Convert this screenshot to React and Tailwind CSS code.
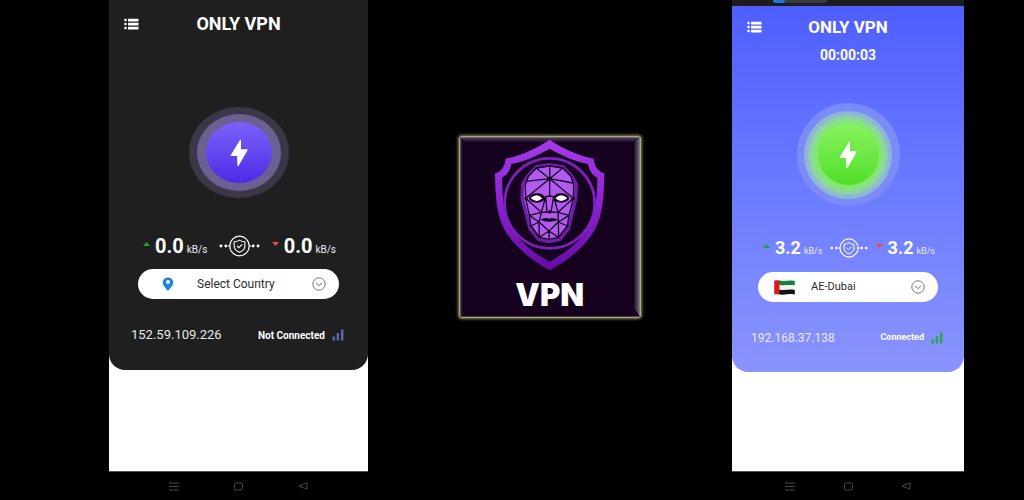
import { useState } from 'react';

const idle = {
  shell: 'bg-[#1f1f1f] rounded-b-[16px]',
  header: 'h-12',
  title: 'text-lg',
  orb: 'mt-[59px] h-[91px] w-[100px] bg-[#3c3746]',
  rings: ['h-[77px] w-[84px] bg-[#6c6093]'],
  core: 'h-[61px] w-[66px] bg-linear-to-b from-[#7d60fa] to-[#5026e6]',
  stats: 'mt-9 pl-[34px] pr-8',
  value: 'text-[20px]',
  unit: 'text-[10px]',
  link: 'w-[41px]',
  picker: 'mt-[11px] mx-[29px] text-xs',
  flagBox: 'w-[59px]',
  footer: 'pl-[22px] pr-6 pb-[25px]',
  ip: 'text-[13px] text-[#e8e8e8]',
  status: 'text-[10px]',
  bars: 'text-[#6664a8]',
};

const active = {
  shell: 'bg-linear-to-b from-[#4f5eff] to-[#8b94fd] rounded-b-[16px]',
  header: 'h-[42px]',
  title: 'text-[17px]',
  orb: 'mt-[41px] h-[103px] w-[103px] bg-[#7b8bfa]',
  rings: [
    'h-[88px] w-[88px] bg-[#8fb7d3]',
    'h-[80px] w-[80px] bg-[#8fceb0]',
    'h-[74px] w-[74px] bg-[#8cdd90]',
    'h-[68px] w-[68px] bg-[#83e86e]',
  ],
  core: 'h-[61px] w-[61px] bg-linear-to-b from-[#86f25c] to-[#4fdf25]',
  stats: 'mt-[30px] pl-[31px] pr-[29px]',
  value: 'text-[18px]',
  unit: 'text-[9px]',
  link: 'w-[38px]',
  picker: 'mt-3 mx-[26px] text-[11px]',
  flagBox: 'w-[53px]',
  footer: 'pl-[19px] pr-[21px] pb-6',
  ip: 'text-[12px] text-[#e9ebff]',
  status: 'text-[9px]',
  bars: 'text-[#2ba54b]',
};

function MenuIcon() {
  return (
    <svg viewBox="0 0 15 12" className="w-[15px] h-3" fill="#fff">
      <circle cx="1.5" cy="2" r="1.3" />
      <circle cx="1.5" cy="6" r="1.3" />
      <circle cx="1.5" cy="10" r="1.3" />
      <rect x="4" y="0.8" width="10.5" height="2.6" rx="0.5" />
      <rect x="4" y="4.8" width="10.5" height="2.6" rx="0.5" />
      <rect x="4" y="8.8" width="10.5" height="2.6" rx="0.5" />
    </svg>
  );
}

function Bolt() {
  return (
    <svg viewBox="0 0 18 28" className="w-[18px] h-7" fill="#fff" stroke="#fff" strokeLinejoin="round">
      <path d="M10.5 1 L1 16.5 H7.6 L8 27 L17.3 10.8 H10.5 Z" />
    </svg>
  );
}

function ShieldLink({ className }) {
  return (
    <svg viewBox="0 0 42 22" className={`h-[22px] ${className}`} fill="none" stroke="#fff">
      <g fill="#fff" stroke="none">
        <circle cx="2" cy="11" r="1.5" />
        <circle cx="7" cy="11" r="1.5" />
        <circle cx="35" cy="11" r="1.5" />
        <circle cx="40" cy="11" r="1.5" />
      </g>
      <circle cx="21" cy="11" r="10" strokeWidth="1.3" />
      <path d="M9 11 H11 M31 11 H33" strokeWidth="1.2" />
      <path
        d="M21 5 C19 6.4 17.3 6.7 15.5 6.7 V11 C15.5 14 17.6 16.2 21 17.5 C24.4 16.2 26.5 14 26.5 11 V6.7 C24.7 6.7 23 6.4 21 5 Z"
        strokeWidth="1.1"
        strokeLinejoin="round"
      />
      <path d="M18.3 10.9 L20.3 12.8 L23.8 9.4" strokeWidth="1.1" />
    </svg>
  );
}

function Pin() {
  return (
    <svg viewBox="0 0 12 14" className="w-3 h-3.5">
      <path d="M6 0.4 C2.8 0.4 0.8 2.6 0.8 5.4 C0.8 8.6 4 11.4 6 13.7 C8 11.4 11.2 8.6 11.2 5.4 C11.2 2.6 9.2 0.4 6 0.4 Z" fill="#1c83de" />
      <circle cx="6" cy="5" r="1.9" fill="#fff" />
    </svg>
  );
}

function Flag() {
  return (
    <svg viewBox="0 0 63 46" className="w-[21px] h-[15px]">
      <path d="M14 1 C30 6 46 -2 63 3 V17 C46 12 34 20 14 15 Z" fill="#12823f" />
      <path d="M14 15 C34 20 46 12 63 17 V31 C46 26 34 34 14 29 Z" fill="#f3f3f3" />
      <path d="M14 29 C34 34 46 26 63 31 V45 C46 40 34 48 14 44 Z" fill="#111" />
      <path d="M0 2 C6 0 10 0 16 2 V45 C10 43 6 43 0 45 Z" fill="#d8191f" />
    </svg>
  );
}

function SpeedStat({ value, up, theme }) {
  return (
    <div className="flex items-center">
      <svg viewBox="0 0 7 4" className="w-[7px] h-1 mr-[5px] mb-1">
        {up ? <path d="M0 4 L3.5 0 L7 4 Z" fill="#22a32c" /> : <path d="M0 0 H7 L3.5 4 Z" fill="#ef4a44" />}
      </svg>
      <p className="flex items-baseline gap-[3px]">
        <span className={`font-bold leading-6 ${theme.value}`}>{value}</span>
        <span className={`text-[#eceaf4] ${theme.unit}`}>kB/s</span>
      </p>
    </div>
  );
}

function NavBar() {
  return (
    <nav className="grid h-[29px] grid-cols-3 place-items-center border-t border-[#555] bg-black px-[12.5%] text-[#484848]">
      <button type="button" aria-label="Recent apps">
        <svg viewBox="0 0 10 9" className="w-2.5 h-[9px]" stroke="currentColor">
          <path d="M0 1 H10 M0 4.5 H10 M0 8 H10" />
        </svg>
      </button>
      <button type="button" aria-label="Home">
        <svg viewBox="0 0 9 9" className="w-[9px] h-[9px]" stroke="currentColor" fill="none">
          <rect x="0.5" y="1" width="8" height="7" rx="1.5" />
        </svg>
      </button>
      <button type="button" aria-label="Back">
        <svg viewBox="0 0 10 8" className="w-2.5 h-2" stroke="currentColor" fill="none" strokeLinejoin="round">
          <path d="M9 0.8 V7.2 L1 4 Z" />
        </svg>
      </button>
    </nav>
  );
}

function Phone({ theme, timer, speed, country, flag, ip, status, statusBar }) {
  const [selected, setSelected] = useState(country);

  return (
    <section className="flex min-w-0 flex-col bg-white text-white">
      {statusBar && (
        <div className="h-1.5 bg-[#1d1d1f] pl-[41px]">
          <div className="h-[3px] w-[54px] rounded-b-full bg-[#3a3b42]">
            <div className="h-[3px] w-3 rounded-b-full bg-[#2478dc]" />
          </div>
        </div>
      )}
      <div className={`flex flex-col ${theme.shell}`}>
        <header className={`grid grid-cols-[1fr_auto_1fr] items-center px-[15px] ${theme.header}`}>
          <button type="button" aria-label="Menu" className="justify-self-start">
            <MenuIcon />
          </button>
          <h2 className={`font-bold leading-6 ${theme.title}`}>ONLY VPN</h2>
        </header>
        {timer && <p className="h-3.5 text-center text-sm leading-3.5 font-bold">{timer}</p>}

        <button
          type="button"
          aria-label="Toggle connection"
          className={`grid self-center place-items-center rounded-[50%] ${theme.orb}`}
        >
          {theme.rings.map((ring) => (
            <span key={ring} className={`col-start-1 row-start-1 rounded-[50%] ${ring}`} />
          ))}
          <span className={`col-start-1 row-start-1 grid place-items-center rounded-[50%] ${theme.core}`}>
            <Bolt />
          </span>
        </button>

        <div className={`flex items-center justify-between ${theme.stats}`}>
          <SpeedStat value={speed} up theme={theme} />
          <ShieldLink className={theme.link} />
          <SpeedStat value={speed} theme={theme} />
        </div>

        <div className={`flex h-[30px] items-center rounded-full bg-white pr-[13px] text-[#2b2b2b] ${theme.picker}`}>
          <span className={`flex shrink-0 justify-center ${theme.flagBox}`}>{flag}</span>
          <select
            aria-label="Country"
            value={selected}
            onChange={(e) => setSelected(e.target.value)}
            className="min-w-0 flex-1 appearance-none bg-transparent outline-none"
          >
            <option>{country}</option>
          </select>
          <svg viewBox="0 0 14 14" className="h-3.5 w-3.5 shrink-0" fill="none" stroke="#77777b">
            <circle cx="7" cy="7" r="6.2" />
            <path d="M4 5.8 L7 8.6 L10 5.8" />
          </svg>
        </div>

        <footer className={`mt-[26px] flex items-center justify-between ${theme.footer}`}>
          <span className={`leading-5 ${theme.ip}`}>{ip}</span>
          <span className="flex items-center gap-[7px]">
            <span className={`font-bold ${theme.status}`}>{status}</span>
            <svg viewBox="0 0 12 12" className={`h-3 w-3 ${theme.bars}`} fill="currentColor">
              <rect x="0.5" y="7.5" width="2.4" height="4" />
              <rect x="4.7" y="4" width="2.4" height="7.5" />
              <rect x="9" y="0.5" width="2.4" height="11" />
            </svg>
          </span>
        </footer>
      </div>
      <div className="flex-1" />
      <NavBar />
    </section>
  );
}

function Logo() {
  return (
    <svg
      viewBox="30 33 546 546"
      className="h-[182px] w-[182px] rounded-[3px] shadow-[0_0_3px_1px_#8d8855]"
      role="img"
      aria-label="VPN"
    >
      <defs>
        <linearGradient id="shield" x1="0" y1="0" x2="0" y2="1">
          <stop offset="0" stopColor="#a53bea" />
          <stop offset="0.5" stopColor="#8a22cf" />
          <stop offset="1" stopColor="#650ba5" />
        </linearGradient>
        <linearGradient id="edge" x1="0" y1="0" x2="1" y2="0">
          <stop offset="0" stopColor="#25182f" />
          <stop offset="1" stopColor="#85808d" />
        </linearGradient>
        <linearGradient id="topEdge" x1="0" y1="0" x2="0" y2="1">
          <stop offset="0" stopColor="#5d5365" />
          <stop offset="1" stopColor="#1a0726" />
        </linearGradient>
      </defs>
      <rect x="30" y="33" width="546" height="546" fill="#16021f" />
      <path d="M30 33 H576 L556 52 H48 Z" fill="url(#topEdge)" />
      <path d="M576 33 V579 L556 550 V52 Z" fill="url(#edge)" />
      <path d="M30 33 L40 48 V570 L30 579 Z" fill="#2b2032" />
      <rect x="32" y="35" width="542" height="542" fill="none" stroke="#aaa58a" strokeWidth="4" />

      {/* shield */}
      <path
        fillRule="evenodd"
        fill="url(#shield)"
        d="M302 44 C345 73 390 92 434 101 C436 124 447 140 466 145 C465 219 461 270 437 314 C409 365 356 407 302 436 C248 407 195 365 167 314 C143 270 139 219 138 145 C157 140 168 124 170 101 C214 92 259 73 302 44 Z
           M302 71 C262 94 224 110 187 117 C183 138 174 151 159 158 C160 220 164 263 185 303 C210 350 255 385 302 410 C349 385 394 350 419 303 C440 263 444 220 445 158 C430 151 421 138 417 117 C380 110 342 94 302 71 Z"
      />
      <circle cx="302" cy="235" r="135" fill="none" stroke="#7d20be" strokeWidth="8" />

      {/* mask */}
      <path
        d="M302 119 L342 125 L367 151 L382 177 L380 221 L368 272 L358 311 L333 343 L300 350 L268 343 L243 311 L233 272 L219 221 L221 177 L237 151 L262 125 Z"
        fill="#b05bf0"
        stroke="#701baa"
        strokeWidth="10"
        strokeLinejoin="round"
      />
      <g fill="none" stroke="#180321" strokeWidth="4" strokeLinejoin="round">
        <path d="M262 129 L302 123 L341 129 L366 154 L374 179 L373 220 L360 271 L355 303 L329 337 L300 343 L271 337 L246 303 L241 271 L230 220 L229 179 L238 154 Z" />
        <path d="M302 123 V161 M262 129 L302 161 L341 129 M231 169 L302 161 L372 174 M302 161 L230 220 M302 161 L373 220" />
        <path d="M302 161 V213 M230 220 L277 262 L241 271 M373 220 L327 262 L360 271" />
        <path d="M290 215 L302 213 L314 215 L306 261 H294 Z M290 215 L277 262 M314 215 L327 262" />
        <path d="M277 262 L294 261 L306 261 L327 262 L328 291 L300 318 L270 291 Z" />
        <path d="M241 271 L270 291 L246 303 L271 337 L270 291 M360 271 L328 291 L355 303 L329 337 L328 291 M300 318 V343 M271 337 L300 318 L329 337" />
      </g>
      <ellipse cx="264" cy="219" rx="24" ry="14" fill="#180321" />
      <ellipse cx="336" cy="219" rx="24" ry="14" fill="#180321" />
      <path d="M245 219 Q263 202 280 220 Q262 236 245 219 Z M319 220 Q336 202 355 219 Q338 236 319 220 Z" fill="#fff" />
      <path d="M273 285 Q287 276 300 281 Q313 276 328 285 Q300 295 273 285 Z" fill="#180321" />
      <g fill="#180321">
        <circle cx="302" cy="161" r="6" />
        <circle cx="302" cy="261" r="5" />
        <circle cx="231" cy="220" r="5" />
        <circle cx="373" cy="220" r="5" />
        <circle cx="246" cy="303" r="4" />
        <circle cx="355" cy="303" r="4" />
      </g>

      <text x="302" y="543" textAnchor="middle" className="fill-white font-['Inter',sans-serif] text-[93px] font-black">
        VPN
      </text>
    </svg>
  );
}

export default function App() {
  return (
    <main className="grid min-h-screen grid-cols-[109fr_259fr_364fr_232fr_60fr] bg-black font-['Roboto',sans-serif]">
      <div />
      <Phone theme={idle} speed="0.0" country="Select Country" flag={<Pin />} ip="152.59.109.226" status="Not Connected" />
      <div className="flex items-center justify-center pb-[46px]">
        <Logo />
      </div>
      <Phone
        theme={active}
        timer="00:00:03"
        speed="3.2"
        country="AE-Dubai"
        flag={<Flag />}
        ip="192.168.37.138"
        status="Connected"
        statusBar
      />
    </main>
  );
}
